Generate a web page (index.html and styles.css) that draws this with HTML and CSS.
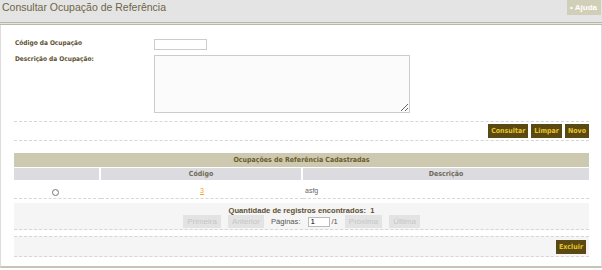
FILE: index.html
```html
<!DOCTYPE html>
<html lang="pt-BR">
<head>
  <meta charset="UTF-8">
  <title>Consultar Ocupação de Referência</title>
  <link rel="stylesheet" href="styles.css">
</head>
<body>

  <header class="topbar">
    <h1>Consultar Ocupação de Referência</h1>
    <a class="help" href="#">&bull; Ajuda</a>
  </header>

  <main class="panel">
    <!-- Filtros -->
    <form class="filters">
      <label for="codigo">Código da Ocupação</label>
      <input type="text" id="codigo" class="field-code">

      <label for="descricao">Descrição da Ocupação:</label>
      <textarea id="descricao" class="field-desc"></textarea>
    </form>

    <div class="actions">
      <button class="btn">Consultar</button>
      <button class="btn">Limpar</button>
      <button class="btn">Novo</button>
    </div>

    <!-- Resultado -->
    <table class="results">
      <thead>
        <tr><th colspan="3" class="caption">Ocupações de Referência Cadastradas</th></tr>
        <tr class="cols">
          <th class="col-sel"></th>
          <th class="col-code">Código</th>
          <th>Descrição</th>
        </tr>
      </thead>
      <tbody>
        <tr>
          <td class="center"><input type="radio" name="sel"></td>
          <td class="center"><a href="#">3</a></td>
          <td>asfg</td>
        </tr>
      </tbody>
    </table>

    <div class="paging">
      <p class="count">Quantidade de registros encontrados:&nbsp; 1</p>
      <div class="pager">
        <button class="btn-off" disabled>Primeira</button>
        <button class="btn-off" disabled>Anterior</button>
        <span>Páginas:</span>
        <input type="text" class="page-input" value="1">
        <span class="total">/1</span>
        <button class="btn-off" disabled>Próxima</button>
        <button class="btn-off" disabled>Última</button>
      </div>
    </div>

    <div class="footer-bar">
      <button class="btn">Excluir</button>
    </div>
  </main>

</body>
</html>
```

FILE: styles.css
```css
body {
  margin: 0;
  font-family: 'Liberation Sans', Arial, sans-serif;
  background: #fff;
  color: #444;
}

.topbar {
  display: flex;
  justify-content: space-between;
  align-items: flex-start;
  height: 22px;
  background: #e4e4e4;
  border-bottom: 3px double #b9b8a4;
}

.topbar h1 {
  margin: 1px 0 0 2px;
  font-size: 10.5px;
  font-weight: normal;
  color: #6e6446;
}

.help {
  margin-right: 1px;
  padding: 3px 4px 3px 3px;
  background: #d2cfb8;
  color: #fff;
  font-size: 8px;
  font-weight: bold;
  text-decoration: none;
}

.panel {
  border-left: 1px solid #ddd;
  border-right: 1px solid #ddd;
  border-bottom: 2px solid #c6c4b2;
  padding: 14px 12px 9px 13px;
  height: 218px;
}

.filters {
  display: grid;
  grid-template-columns: 139px 256px;
  row-gap: 5px;
  padding-left: 1px;
  margin-bottom: 8px;
}

.filters label {
  font-family: 'DejaVu Sans Condensed', Tahoma, sans-serif;
  font-size: 6.5px;
  font-weight: bold;
  color: #5e5032;
}

.field-code {
  width: 53px;
  height: 11px;
  padding: 0;
  border: 1px solid #ccc;
  box-sizing: border-box;
}

.field-desc {
  width: 256px;
  height: 58px;
  padding: 0;
  border: 1px solid #ccc;
  background: #fbfbfb;
  box-sizing: border-box;
  resize: both;
}

.actions {
  display: flex;
  justify-content: flex-end;
  gap: 3px;
  padding: 2px 0 2px;
  border-top: 1px dashed #d6d6d6;
  border-bottom: 1px dashed #d6d6d6;
  margin-bottom: 12px;
}

.btn {
  height: 14px;
  padding: 0 3px;
  border: none;
  background: #5a4912;
  color: #e6c42a;
  font-family: 'DejaVu Sans Condensed', Tahoma, sans-serif;
  font-size: 7px;
  font-weight: bold;
  cursor: pointer;
}

.results {
  width: 100%;
  border-collapse: separate;
  border-spacing: 0;
  font-size: 7px;
}

.results th {
  font-family: 'DejaVu Sans Condensed', Tahoma, sans-serif;
  font-weight: bold;
  color: #6b5b2b;
}

.caption {
  height: 14px;
  padding: 0;
  background: #cdc9b0;
  border-bottom: 1px solid #fff;
}

.cols th {
  height: 12px;
  padding: 0;
  background: #dcdce0;
  color: #6f6a58;
  border-right: 2px solid #fff;
}

.cols th:last-child {
  border-right: none;
}

.col-sel {
  width: 85px;
}

.col-code {
  width: 200px;
}

.results td {
  height: 16px;
  padding: 2px 0 0 2px;
  color: #666;
  border-bottom: 1px dashed #d6d6d6;
}

.results .center {
  text-align: center;
  padding-left: 0;
}

.results input[type="radio"] {
  width: 7px;
  height: 7px;
  margin: 5px 4px 0 0;
}

.results a {
  color: #f0a030;
}

.paging {
  margin-top: 4px;
  padding: 2px 0 1px;
  background: #f5f5f5;
  border-bottom: 1px dashed #d6d6d6;
  text-align: center;
  font-size: 7.6px;
}

.count {
  margin: 1px 0 0;
  font-weight: bold;
  color: #5e5032;
}

.pager {
  display: flex;
  justify-content: center;
  align-items: center;
  gap: 7px;
  color: #555;
}

.btn-off {
  height: 13px;
  padding: 0 4px;
  border: none;
  background: #e3e3e3;
  color: #c6c6c6;
  font-family: 'Liberation Sans', Arial, sans-serif;
  font-size: 8px;
}

.page-input {
  width: 22px;
  height: 10px;
  padding: 0 2px;
  margin-right: -5px;
  border: 1px solid #bbb;
  font-size: 8px;
  box-sizing: border-box;
}

.footer-bar {
  display: flex;
  justify-content: flex-end;
  margin-top: 6px;
  padding: 3px 3px 2px;
  background: #f5f5f5;
  border-top: 1px dashed #d6d6d6;
  border-bottom: 1px dashed #d6d6d6;
}
```
